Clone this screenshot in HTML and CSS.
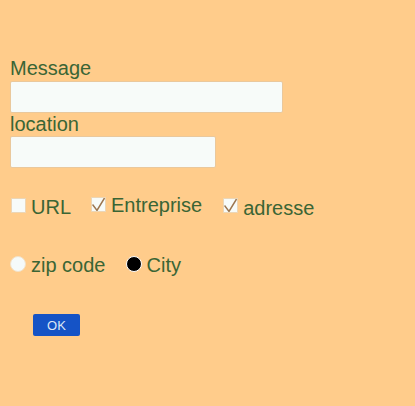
FILE: index.html
```html
<!DOCTYPE html>
<html>
<head>
<meta charset="utf-8">
<link rel="stylesheet" href="styles.css">
</head>
<body>
<form class="form">
  <label class="field-label" for="msg">Message</label>
  <input class="text-input wide" id="msg" type="text">
  <label class="field-label" for="loc">location</label>
  <input class="text-input narrow" id="loc" type="text">

  <div class="check-row">
    <label class="opt opt-url"><input type="checkbox" class="cb"><span>URL</span></label>
    <label class="opt opt-ent"><input type="checkbox" class="cb" checked><span>Entreprise</span></label>
    <label class="opt opt-adr"><input type="checkbox" class="cb" checked><span>adresse</span></label>
  </div>

  <div class="radio-row">
    <label class="opt"><input type="radio" name="r" class="rb"><span>zip code</span></label>
    <label class="opt"><input type="radio" name="r" class="rb" checked><span>City</span></label>
  </div>

  <div class="btn-row">
    <button type="button" class="ok-btn">OK</button>
  </div>
</form>
</body>
</html>
```

FILE: styles.css
```css
html, body {
  margin: 0;
  padding: 0;
  background: #ffcc8b;
}
body {
  width: 415px;
  height: 406px;
  font-family: "Liberation Sans", Arial, sans-serif;
  color: #3a6535;
}
.form {
  display: flex;
  flex-direction: column;
  align-items: flex-start;
  padding: 57px 0 0 10px;
}
.field-label {
  font-size: 20px;
  line-height: 23px;
  height: 23px;
}
.field-label:first-child { height: 24px; }
.text-input {
  box-sizing: border-box;
  height: 32px;
  margin: 0;
  border: 1px solid #eac89c;
  border-radius: 2px;
  background: #f7fbf9;
  outline: none;
}
.wide { width: 273px; }
.narrow { width: 206px; }

.check-row {
  display: flex;
  align-items: flex-start;
  margin-top: 26px;
  margin-left: 1px;
  gap: 20px;
}
.opt {
  display: flex;
  align-items: flex-start;
  gap: 5px;
  font-size: 20px;
  line-height: 23px;
}
.opt-url { margin-top: 2px; }
.opt-url .cb { margin-top: 2px; }
.opt-ent { margin-top: 0; }
.opt-ent .cb { margin-top: 3px; }
.opt-adr { margin-top: 3px; margin-left: 1px; }
.opt-adr .cb { margin-top: 1px; }

.cb {
  -webkit-appearance: none;
  appearance: none;
  margin: 0;
  width: 15px;
  height: 15px;
  box-sizing: border-box;
  border: 1px solid #ecd6b6;
  background: #f7fbf9 no-repeat center / 15px 15px;
}
.cb:checked {
  background-image: url("data:image/svg+xml,%3Csvg xmlns='http://www.w3.org/2000/svg' viewBox='0 0 15 15'%3E%3Cpath d='M1.5 7.5 L6 13.5 L13.5 1' fill='none' stroke='%239c7650' stroke-width='1.5'/%3E%3C/svg%3E");
}

.radio-row {
  display: flex;
  align-items: flex-start;
  gap: 20px;
  margin-top: 34px;
}
.rb {
  -webkit-appearance: none;
  appearance: none;
  margin: 2px 0 0 0;
  width: 16px;
  height: 16px;
  border-radius: 50%;
  box-sizing: border-box;
  border: 1px solid #f3e2c8;
  background: #f5fafa;
}
.rb:checked {
  background: #000;
  border: 1px solid #fff;
}

.btn-row {
  margin-top: 37px;
  margin-left: 23px;
}
.ok-btn {
  display: block;
  width: 47px;
  height: 22px;
  border: none;
  border-radius: 2px;
  background: #1553c6;
  color: #dde6f5;
  font-family: "Liberation Sans", Arial, sans-serif;
  font-size: 13px;
  padding: 0;
}
```
